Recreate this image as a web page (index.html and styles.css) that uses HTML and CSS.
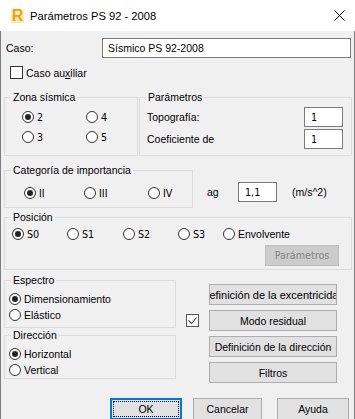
FILE: index.html
```html
<!DOCTYPE html>
<html lang="es">
<head>
<meta charset="utf-8">
<title>Parámetros PS 92 - 2008</title>
<link rel="stylesheet" href="styles.css">
</head>
<body>
<div class="win">
  <div class="titlebar">
    <span class="logo">R</span>
    <span class="title">Parámetros PS 92 - 2008</span>
    <svg class="close" viewBox="0 0 11 11" width="11" height="11"><path d="M0.5 0.5 L10.5 10.5 M10.5 0.5 L0.5 10.5" stroke="#000" stroke-width="1" fill="none"/></svg>
  </div>
  <div class="body">
    <div class="caso">
      <span class="caso-label">Caso:</span>
      <div class="input wide">Sísmico PS 92-2008</div>
    </div>
    <div class="chkrow">
      <span class="cb"></span>
      <span>Caso au<u>x</u>iliar</span>
    </div>

    <div class="r3">
      <fieldset class="g zona">
        <legend>Zona sísmica</legend>
        <div class="zgrid">
          <div class="rad"><span class="rb on"></span><span class="t">2</span></div>
          <div class="rad"><span class="rb"></span><span class="t">4</span></div>
          <div class="rad"><span class="rb"></span><span class="t">3</span></div>
          <div class="rad"><span class="rb"></span><span class="t">5</span></div>
        </div>
      </fieldset>
      <fieldset class="g params">
        <legend>Parámetros</legend>
        <div class="prow first"><span>Topografía:</span><div class="input small t">1</div></div>
        <div class="prow"><span>Coeficiente de</span><div class="input small t">1</div></div>
      </fieldset>
    </div>

    <div class="r4">
      <fieldset class="g cat">
        <legend>Categoría de importancia</legend>
        <div class="cgrid">
          <div class="rad"><span class="rb on"></span><span class="t">II</span></div>
          <div class="rad"><span class="rb"></span><span class="t">III</span></div>
          <div class="rad"><span class="rb"></span><span class="t">IV</span></div>
        </div>
      </fieldset>
      <div class="ag">
        <span class="ag-label">ag</span>
        <div class="input small t">1,1</div>
        <span class="unit">(m/s^2)</span>
      </div>
    </div>

    <div class="r5">
      <fieldset class="g pos">
        <legend>Posición</legend>
        <div class="pgrid">
          <div class="rad"><span class="rb on"></span><span class="t">S0</span></div>
          <div class="rad"><span class="rb"></span><span class="t">S1</span></div>
          <div class="rad"><span class="rb"></span><span class="t">S2</span></div>
          <div class="rad"><span class="rb"></span><span class="t">S3</span></div>
          <div class="rad"><span class="rb"></span><span>Envolvente</span></div>
        </div>
        <div class="pbtnrow"><div class="btn disabled t">Parámetros</div></div>
      </fieldset>
    </div>

    <div class="r6">
      <div class="leftcol">
        <fieldset class="g esp">
          <legend>Espectro</legend>
          <div class="vrad first"><div class="rad"><span class="rb on"></span><span>Dimensionamiento</span></div></div>
          <div class="vrad"><div class="rad"><span class="rb"></span><span>Elástico</span></div></div>
        </fieldset>
        <fieldset class="g dir">
          <legend>Dirección</legend>
          <div class="vrad first"><div class="rad"><span class="rb on"></span><span>Horizontal</span></div></div>
          <div class="vrad"><div class="rad"><span class="rb"></span><span>Vertical</span></div></div>
        </fieldset>
      </div>
      <div class="rightcol">
        <div class="btn b1"><span class="clip">Definición de la excentricidad</span></div>
        <span class="cb checked"><svg viewBox="0 0 11 11" width="11" height="11"><path d="M1.5 5.5 L4.5 8.5 L9.5 2.5" stroke="#444" stroke-width="1.1" fill="none"/></svg></span>
        <div class="btn b2">Modo residual</div>
        <div class="btn b3">Definición de la dirección</div>
        <div class="btn b4">Filtros</div>
      </div>
    </div>

    <div class="r7">
      <div class="btn ok">OK</div>
      <div class="btn cancel">Cancelar</div>
      <div class="btn help">Ayuda</div>
    </div>
  </div>
</div>
</body>
</html>
```
FILE: styles.css
```css
* { box-sizing: border-box; }
html, body { margin: 0; padding: 0; }
body {
  width: 355px;
  height: 419px;
  overflow: hidden;
  background: #f0f0f0;
  color: #000;
  font-family: "Liberation Sans", Arial, sans-serif;
  font-size: 10.5px;
}
.t { font-family: "DejaVu Sans", Verdana, sans-serif; font-size: 9.6px; }

.win { width: 355px; height: 419px; display: flex; flex-direction: column; }

.titlebar {
  flex: none;
  height: 31px;
  background: #fff;
  display: flex;
  align-items: center;
}
.logo {
  margin-left: 11px;
  width: 13px;
  height: 15px;
  display: flex;
  align-items: center;
  justify-content: center;
  font-family: "Liberation Sans", Arial, sans-serif;
  font-weight: bold;
  font-size: 16px;
  color: #e9a20c;
  background: linear-gradient(#fff7d8, #fde9a6);
  border-radius: 1px;
}
.title { margin-left: 6px; font-size: 11.2px; }
.close { margin-left: auto; margin-right: 10px; }

.body {
  flex: 1;
  border: 1px solid #7e7e7e;
  border-top: 0;
  display: flex;
  flex-direction: column;
}

.input {
  height: 20px;
  border: 1px solid #7a7a7a;
  background: #fff;
  display: flex;
  align-items: center;
  padding-left: 5px;
  white-space: nowrap;
}
.input.small { width: 39px; padding-left: 6px; }

.caso { margin-top: 7px; height: 20px; display: flex; align-items: center; }
.caso-label { margin-left: 5px; width: 96px; }
.input.wide { width: 249px; }

.chkrow { margin-top: 8px; margin-left: 9px; height: 13px; display: flex; align-items: center; gap: 3px; }
.cb { flex: none; width: 13px; height: 13px; border: 1px solid #333; background: #fff; display: flex; align-items: center; justify-content: center; }
.cb.checked { border-color: #555; }

fieldset.g {
  margin: 0;
  padding: 0;
  border: 1px solid #dcdcdc;
  min-width: 0;
}
fieldset.g legend {
  margin-left: 6px;
  padding: 0 2px;
  height: 14px;
  line-height: 14px;
}

.rad { display: flex; align-items: center; gap: 3px; white-space: nowrap; }
.rb {
  flex: none;
  width: 12px;
  height: 12px;
  border: 1px solid #333;
  border-radius: 50%;
  background: #fff;
  display: flex;
  align-items: center;
  justify-content: center;
}
.rb.on::after { content: ""; width: 6px; height: 6px; border-radius: 50%; background: #222; }

.r3 { margin-top: 11px; margin-left: 3px; display: flex; gap: 1px; }
.zona { width: 134px; height: 66px; }
.params { width: 213px; height: 66px; }
.zgrid { margin: 3px 0 0 17px; display: grid; grid-template-columns: 64px 64px; grid-auto-rows: 20px; }
.prow { height: 20px; margin: 2px 8px 0 7px; display: flex; align-items: center; justify-content: space-between; }
.prow.first { margin-top: 3px; }

.r4 { margin-top: 7px; margin-left: 3px; display: flex; }
.cat { width: 189px; height: 45px; }
.cgrid { margin: 6px 0 0 19px; display: grid; grid-template-columns: 60px 64px auto; grid-auto-rows: 20px; }
.ag { margin-left: 14px; margin-top: 19px; height: 20px; display: flex; align-items: center; }
.ag-label { width: 31px; }
.unit { margin-left: 15px; }

.r5 { margin-top: 2px; margin-left: 3px; display: flex; }
.pos { width: 348px; height: 60px; }
.pgrid { margin-left: 7px; display: grid; grid-template-columns: 55px 56px 55px 45px auto; grid-auto-rows: 20px; }
.pbtnrow { margin: 1px 12px 0 0; display: flex; justify-content: flex-end; }

.btn {
  display: flex;
  align-items: center;
  justify-content: center;
  background: #e1e1e1;
  border: 1px solid #adadad;
  white-space: nowrap;
  overflow: hidden;
}
.btn.disabled { width: 74px; height: 21px; background: #cccccc; border-color: #bfbfbf; color: #838383; }
.clip { font-size: 11px; }

.r6 { margin-top: 3px; margin-left: 3px; display: flex; }
.leftcol { width: 172px; display: flex; flex-direction: column; }
.esp { height: 55px; }
.dir { height: 51px; }
.vrad { height: 16px; margin-left: 4px; display: flex; align-items: center; }
.vrad.first { margin-top: 4px; }

.rightcol {
  margin-left: 10px;
  margin-top: 11px;
  display: grid;
  grid-template-columns: 23px 128px;
  grid-template-rows: repeat(4, 21px);
  row-gap: 5px;
  align-items: center;
}
.rightcol .btn { grid-column: 2; height: 21px; }
.rightcol .cb { grid-column: 1; grid-row: 2; }
.rightcol .b1 { grid-row: 1; }
.rightcol .b2 { grid-row: 2; }
.rightcol .b3 { grid-row: 3; }
.rightcol .b4 { grid-row: 4; }

.r7 { margin-top: 15px; height: 22px; display: flex; }
.r7 .btn { height: 22px; }
.ok {
  margin-left: 109px;
  width: 72px;
  border-color: #0078d7 !important;
  box-shadow: inset 0 0 0 1px #0078d7;
  outline: 1px dotted #000;
  outline-offset: -4px;
}
.cancel { margin-left: 11px; width: 69px; }
.help { margin-left: 15px; width: 72px; }
```
